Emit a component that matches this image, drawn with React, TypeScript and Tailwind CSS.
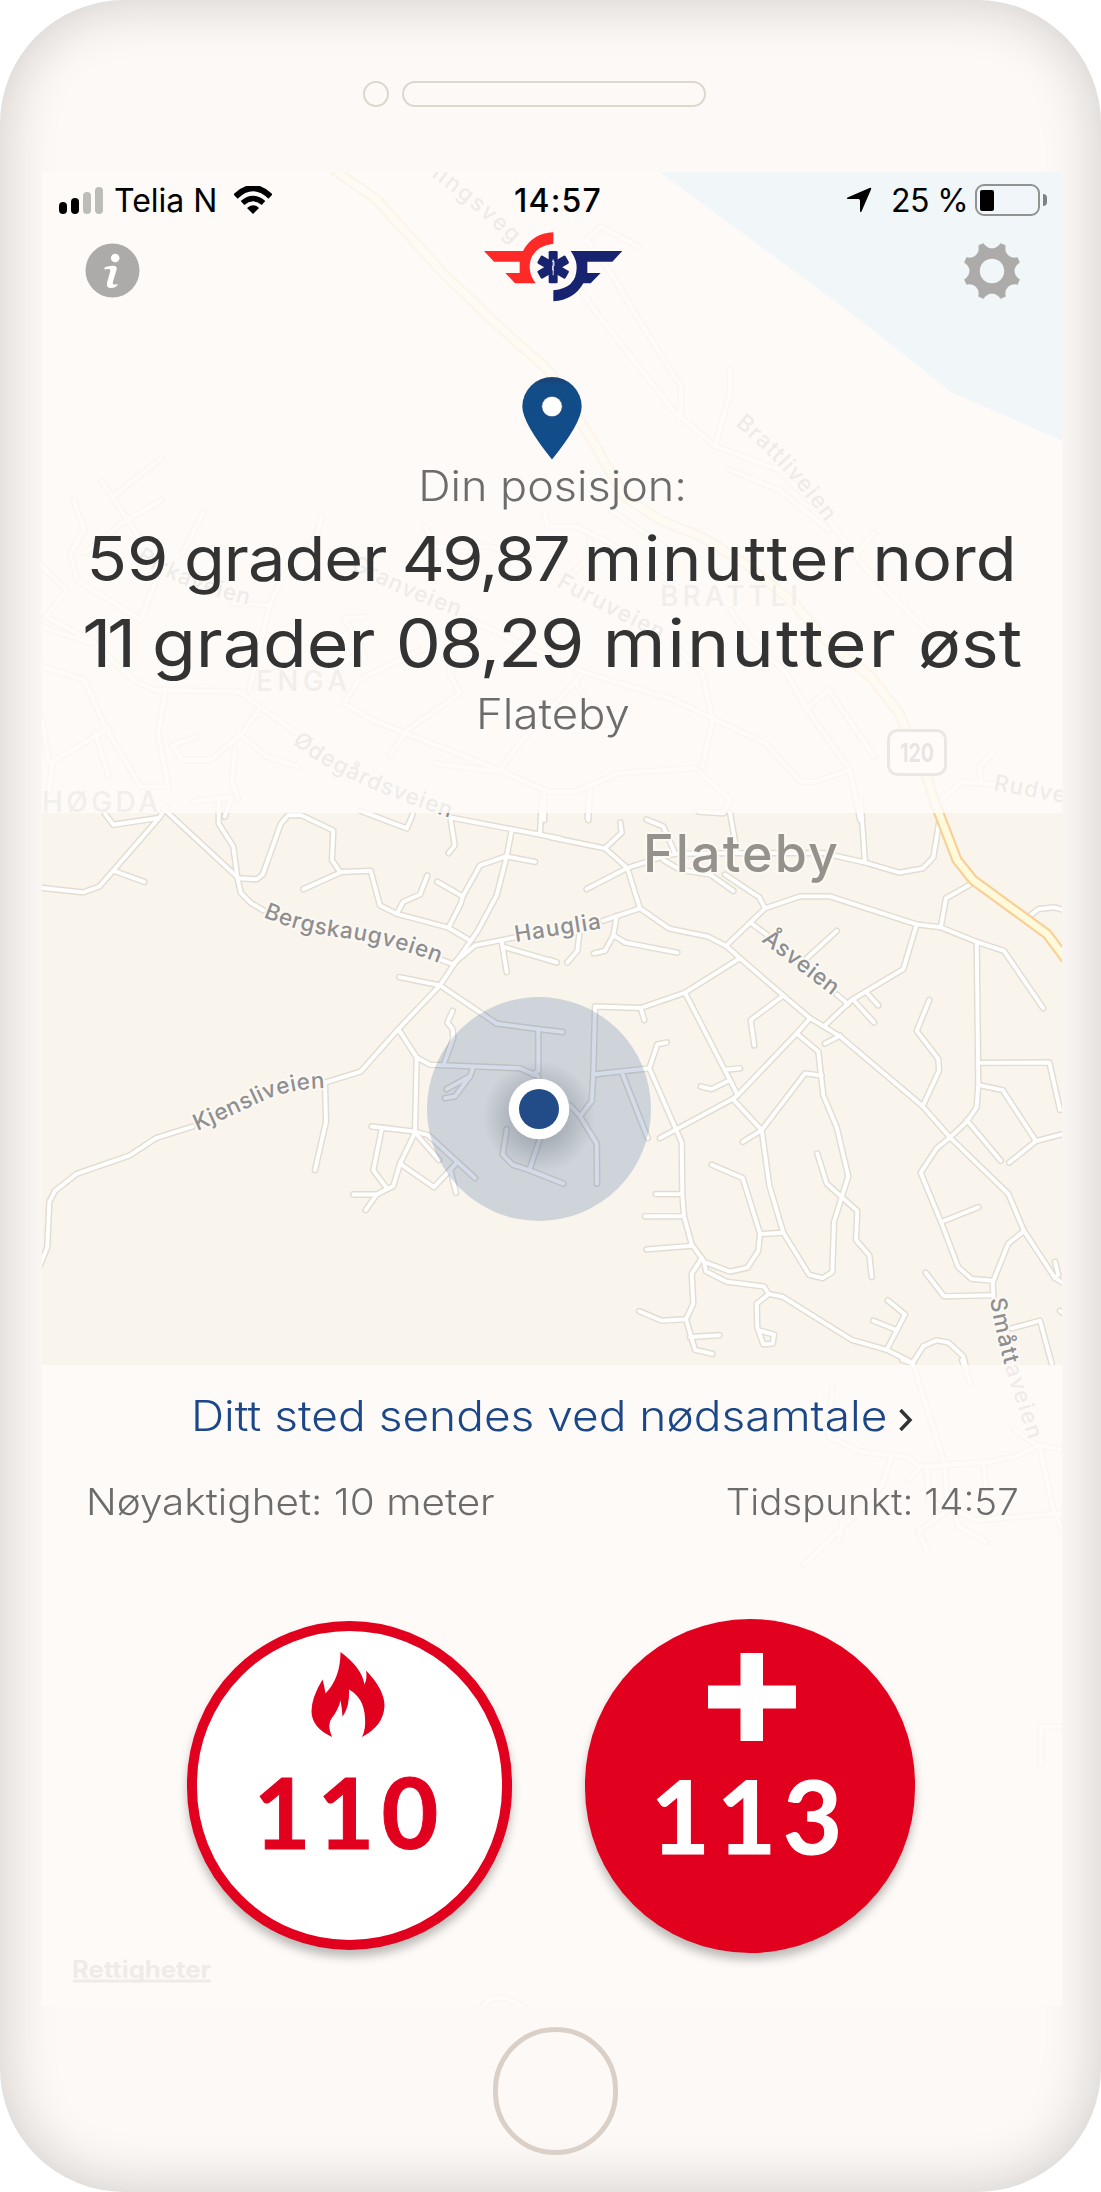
import React from "react";

type Tile = { ox: number; oy: number; sx: number; sy: number; roads: string[] };

// Road geometry, grouped in survey tiles: origin, scale and polylines in tile units.
const tiles: Tile[] = [
  {
    ox: 40, oy: 800, sx: 1 / 3, sy: 0.3636,
    roads: [
      "0,241 8,242 130,254 178,238 222,192 360,46 378,18",
      "195,38 220,68 350,50",
      "222,195 313,225",
      "378,30 592,212",
      "536,0 536,65 580,128 592,212 602,255 632,283 670,303",
      "592,215 650,218 668,205 722,66 744,42 784,42 880,84 876,165 900,198 992,195 1020,290 1070,313 1222,350 1288,385",
      "790,245 900,200",
      "1070,313 1090,280 1140,260 1162,208",
      "962,30 1100,78 1118,40",
      "1232,48 1560,106",
      "1232,55 1244,125 1226,146",
      "1505,0 1500,95",
      "1415,82 1400,155 1370,262 1312,362 1240,455 1200,510 1075,630 962,747 862,775",
      "1226,350 1262,285 1268,265 1320,180 1398,155 1485,170",
      "1192,225 1268,265",
      "1200,438 1240,452",
      "1240,450 1305,400 1425,378",
      "1385,390 1400,473",
      "1395,405 1548,446",
      "1078,487 1200,510 1370,615 1495,630 1568,638",
      "1075,630 1130,708 1170,728 1440,738 1495,760",
      "1210,730 1240,655 1238,630 1222,612 1238,580",
      "1130,708 1125,912",
      "995,898 1125,912 1165,922 1305,1040",
      "1025,905 1000,1018 1038,1065",
      "1125,915 1080,1000 1060,1062 1010,1085 940,1085",
      "1010,1085 977,1128",
      "1080,1000 1182,1065 1248,1000",
      "1125,915 1197,990",
      "1232,1020 1248,1080",
      "1300,735 1290,760 1220,795",
      "1290,760 1245,815 1215,820",
      "1495,630 1495,745 1478,755",
      "1400,905 1388,975 1418,1003 1468,1018 1570,1055",
      "1468,1018 1500,930",
      "855,775 858,885 825,1018",
      "458,898 348,930 268,978 110,1028 45,1075 28,1105 22,1230 0,1280",
    ],
  },
  {
    ox: 550, oy: 800, sx: 1 / 3, sy: 0.3636,
    roads: [
      "0,102 165,133 232,187 270,298 358,354 475,376 530,402 570,435 700,538 780,600 820,622 870,650 1118,842 1200,928 1375,1083 1422,1185 1515,1315 1540,1328",
      "115,0 113,50",
      "165,133 215,90 211,62",
      "110,245 232,187 340,155 375,148 560,146 820,146 945,172 1048,200 1118,188 1150,158 1172,35",
      "290,54 340,73 372,140",
      "540,35 560,140",
      "340,165 390,192 480,205 550,250",
      "525,205 628,268 645,298 535,395",
      "645,298 750,265 840,265 1100,342 1172,350 1280,390 1362,415 1480,573",
      "605,340 650,370",
      "765,440 860,360",
      "932,0 945,172",
      "1172,350 1188,270 1265,230",
      "1100,342 1060,465 905,550 822,622",
      "860,535 895,562",
      "950,530 985,565",
      "915,555 972,612",
      "825,670 870,648",
      "1280,390 1285,780 1280,845 1250,885 1200,928 1160,958 1112,1025 1175,1165 1225,1285 1265,1317 1328,1322 1330,1365",
      "1285,723 1498,722 1530,852",
      "1290,785 1358,798 1458,938 1378,997",
      "1458,938 1540,918",
      "1250,880 1352,992",
      "1138,550 1100,635 1165,712 1167,745 1118,842",
      "1175,1160 1285,1120",
      "1422,1185 1375,1220 1330,1322",
      "1330,1362 1182,1365 1127,1300",
      "270,298 160,332",
      "200,318 190,372 165,415 132,422",
      "195,375 225,392 382,420",
      "88,370 82,415 52,447",
      "0,440 20,447",
      "570,435 405,530 272,572 135,568 130,755 125,828 90,870 60,840",
      "272,572 283,605",
      "405,530 563,812 740,642 780,600",
      "563,812 548,822 330,930",
      "700,538 602,605 613,675",
      "740,642 805,692 820,812 860,900 895,1035 875,1092 852,1160 847,1298 818,1315 778,1306 700,1190 658,1060 635,908 548,822",
      "635,908 765,752 815,758",
      "635,908 578,940",
      "525,742 570,738",
      "540,770 485,795 452,788",
      "350,667 322,672 298,738 395,942 397,1082 402,1145 425,1222 455,1260 425,1303 430,1385 408,1428 435,1512 487,1523",
      "130,755 298,738",
      "218,755 293,930",
      "90,870 140,945 141,1055",
      "317,1084 397,1084",
      "285,1145 402,1145",
      "290,1236 425,1226",
      "455,1260 462,1270 540,1297 592,1286 625,1240 630,1192 578,1040 485,1003",
      "630,1194 700,1190",
      "462,1270 468,1296 530,1325 642,1338 655,1358 697,1366 905,1485 1010,1512 1088,1548 1120,1502 1160,1486 1195,1492 1240,1530 1248,1560",
      "655,1360 620,1385 622,1450 640,1497 668,1495 672,1470 632,1460",
      "268,1406 335,1432 408,1428",
      "420,1477 508,1472",
      "802,972 830,1055 922,1130 918,1210 958,1252 965,1312",
      "1010,1512 1065,1415 1013,1376",
      "970,1432 1040,1458",
      "1385,1453 1470,1432 1505,1550",
      "1515,1270 1525,1305 1515,1315",
      "1430,325 1465,300 1512,295 1540,302",
      "1530,1405 1540,1412",
    ],
  },
  {
    ox: 0, oy: 320, sx: 0.7022, sy: 1 / 3,
    roads: [
      "835,-240 855,-280 910,-220",
      "835,-240 870,-140 910,0 970,200 970,280",
      "740,-230 790,-200 850,-20 960,275 1020,380 1110,450 1180,600 1230,740 1310,910 1360,1000",
      "1040,150 1040,220 1030,290 1020,370",
      "1040,450 1110,510 1180,630",
      "230,415 160,530 145,485",
      "160,530 200,660",
      "105,540 120,630 100,700 110,780 200,900 230,740",
      "230,540 180,600 120,700",
      "290,575 260,700",
      "458,590 450,650 430,700 400,780 385,850 355,1110",
      "385,855 330,850",
      "60,740 95,810 65,890 130,960 190,1080 220,1110 340,1115 370,1160 430,1250",
      "60,920 130,970",
      "60,1040 120,1080 150,1220 200,1400 240,1400 225,1240 235,1120",
      "370,1165 345,1240 300,1320 260,1320 245,1275 280,1250",
      "345,1250 380,1310 425,1340",
      "335,1290 330,1380 340,1440",
      "275,1445 330,1430 320,1490",
      "60,1200 70,1330 155,1225",
      "135,1240 155,1370",
      "75,1330 70,1410",
      "490,1150 510,1080 600,990",
      "490,1150 530,1200 710,1350 780,1415 820,1415 880,1360 990,1345 1040,1440 1030,1480 995,1475",
      "620,1330 710,1355 740,1270 830,1060",
      "640,1000 640,1060 655,1120 580,1230 555,1305",
      "520,890 490,895 510,960 520,1020",
      "660,890 830,1055 960,1140 1090,1270 1140,1385 1160,1385 1210,1350",
      "1000,1340 1015,1200 1000,1060 960,970",
      "820,1090 850,1190",
      "1040,870 1070,960 1120,1060 1150,1170 1210,1350 1225,1500",
      "1115,1060 1160,980",
      "1150,1165 1180,1110 1245,1310",
      "775,570 780,620 820,620 860,660 950,780",
      "840,660 840,710 800,790",
      "870,570 960,700",
      "1415,1295 1395,1340 1398,1390 1370,1385 1335,1450",
      "1398,1390 1420,1395",
      "605,620 620,680 700,680 760,720",
      "775,1420 775,1500",
      "840,1410 838,1500",
      "1245,640 1220,700",
    ],
  },
  {
    ox: 0, oy: 1360, sx: 0.7022, sy: 1 / 3,
    roads: [
      "1285,0 1300,10 1345,310",
      "1370,0 1382,70",
      "1185,85 1180,230 1225,275 1290,290 1310,320 1410,305 1445,290 1480,255 1513,270",
      "1270,290 1255,380 1220,460 1145,615",
      "1310,320 1295,360",
      "1320,325 1322,420 1350,450 1308,515 1322,580",
      "1345,310 1350,440 1390,480 1513,460",
      "1400,310 1405,400",
      "1480,255 1500,450 1513,510",
      "1445,210 1480,260",
      "1360,460 1365,500 1405,545",
      "1200,480 1195,540",
      "1482,1215 1482,1100 1513,1100",
      "688,1935 700,1915 720,1915 750,1945",
    ],
  },
];

const paths = tiles.flatMap((t) =>
  t.roads.map(
    (r) =>
      "M" +
      r
        .split(" ")
        .map((p) => {
          const [x, y] = p.split(",").map(Number);
          return `${(t.ox + x * t.sx).toFixed(1)} ${(t.oy + y * t.sy).toFixed(1)}`;
        })
        .join("L"),
  ),
);

const highway =
  "M324 160L340 174L376 199L442 272L492 320L548 370L590 437L625 497L660 520L702 537L744 563L794 603L822 637L871 677L899 713L927 777L935 803L957 860L973 880L1047 934L1068 962";

const labels: { id: string; d: string; text: string; spacing: number }[] = [
  { id: "berg", d: "M263 917Q300 933 345 938Q392 944 446 966", text: "Bergskaugveien", spacing: 0.7 },
  { id: "kjen", d: "M197 1131Q240 1112 265 1100Q292 1088 332 1088", text: "Kjensliveien", spacing: 0.6 },
  { id: "haug", d: "M516 942Q560 935 612 927", text: "Hauglia", spacing: 1 },
  { id: "asv", d: "M761 941L843 1004", text: "Åsveien", spacing: 0.6 },
  { id: "smat", d: "M990 1299Q996 1335 1006 1370Q1015 1400 1034 1455", text: "Småttaveien", spacing: 1.4 },
  { id: "oded", d: "M292 743Q340 783 460 821", text: "Ødegårdsveien", spacing: 1 },
  { id: "gran", d: "M350 568Q400 598 480 624", text: "Granveien", spacing: 1.2 },
  { id: "rka", d: "M136 560Q190 595 270 609", text: "Birkaveien", spacing: 1 },
  { id: "furu", d: "M556 586Q600 611 665 642", text: "Furuveien", spacing: 1.4 },
  { id: "brat", d: "M735 425Q790 470 842 545", text: "Brattliveien", spacing: 1.2 },
  { id: "ling", d: "M431 176Q475 208 530 260", text: "lingsveg", spacing: 2.2 },
  { id: "rud", d: "M993 790L1070 804", text: "Rudve", spacing: 1.2 },
];

function MapCanvas() {
  return (
    <svg
      className="absolute inset-0 h-full w-full font-['Inter',sans-serif]"
      viewBox="42 172 1020 1834"
      fill="none"
      strokeLinecap="round"
      strokeLinejoin="round"
    >
      <rect x="42" y="172" width="1020" height="1834" fill="#f9f5ed" />
      <path d="M660 172L860 320L951 392L1062 441V172Z" fill="#a4e1f6" />
      {paths.map((d, i) => (
        <path key={i} d={d} stroke="#e3dcd1" strokeWidth="6.8" />
      ))}
      {paths.map((d, i) => (
        <path key={i} d={d} stroke="#ffffff" strokeWidth="3.9" />
      ))}
      <path d={highway} stroke="#f9cf95" strokeWidth="11" />
      <path d={highway} stroke="#fffadc" strokeWidth="6.8" />
      <g fill="#8f8f91" stroke="#fcf9f4" strokeWidth="4" fontWeight="500" fontSize="22.500" style={{ paintOrder: "stroke" }}>
        {labels.map((l) => (
          <React.Fragment key={l.id}>
            <path id={l.id} d={l.d} fill="none" stroke="none" />
            <text letterSpacing={l.spacing}>
              <textPath href={`#${l.id}`}>{l.text}</textPath>
            </text>
          </React.Fragment>
        ))}
      </g>
      <g fill="#95918b">
        <text x="643" y="872" fontSize="52" fontWeight="450" textLength="195" stroke="#fcf9f4" strokeWidth="4" style={{ paintOrder: "stroke" }}>
          Flateby
        </text>
        <g fill="#a8a5a0" fontSize="28" fontWeight="500">
          <text x="256" y="691" textLength="91">ENGA</text>
          <text x="660" y="606" textLength="138">BRATTLI</text>
          <text x="42" y="812" textLength="116">HØGDA</text>
        </g>
      </g>
      <rect x="888.5" y="730.5" width="57" height="44" rx="9" fill="#fff" stroke="#757575" strokeWidth="3" />
      <text x="917" y="762" fontSize="25" fontWeight="700" fill="#666" textAnchor="middle" textLength="34" lengthAdjust="spacingAndGlyphs">120</text>
      <g fontSize="24" fontWeight="700" fill="#8b8b8b">
        <text x="72" y="1978" textLength="139" lengthAdjust="spacingAndGlyphs">Rettigheter</text>
        <rect x="73" y="1979.500" width="138" height="3" />
      </g>
      <defs>
        <radialGradient id="glow">
          <stop offset="0.4" stopColor="#5a6270" stopOpacity="0.34" />
          <stop offset="1" stopColor="#5a6270" stopOpacity="0" />
        </radialGradient>
      </defs>
      <circle cx="539" cy="1109" r="112" fill="#214c88" fillOpacity="0.195" />
      <circle cx="539" cy="1117" r="56" fill="url(#glow)" />
      <circle cx="539" cy="1109" r="30.3" fill="#fff" />
      <circle cx="539" cy="1109" r="20" fill="#214c88" />
    </svg>
  );
}

function StatusBar() {
  return (
    <div className="flex h-14 items-center text-[32px] leading-none text-black">
      <div className="ml-[17px] flex h-[27px] items-end gap-1">
        <i className="h-3 w-2 rounded-sm bg-black" />
        <i className="h-4 w-2 rounded-sm bg-black" />
        <i className="h-[22px] w-2 rounded-sm bg-[#bcbcb8]" />
        <i className="h-[27px] w-2 rounded-sm bg-[#bcbcb8]" />
      </div>
      <span className="ml-[11px] w-[103px] whitespace-nowrap pt-px">Telia N</span>
      <svg className="ml-[17px] h-7 w-[38px]" viewBox="0 0 38 28">
        <path d="M1.5 10.5Q19 -6.500 36.500 10.500" fill="none" stroke="#000" strokeWidth="6" />
        <path d="M8.500 17Q19 8 29.500 17" fill="none" stroke="#000" strokeWidth="5.500" />
        <path d="M13 22Q19 16.500 25 22L19 28Z" />
      </svg>
      <span className="ml-[242px] w-[92px] whitespace-nowrap pt-px font-medium tracking-[1.2px]">14:57</span>
      <svg className="ml-[240px] h-[26px] w-[26px]" viewBox="0 0 26 26">
        <path d="M23.500 1Q26 0 25 2.500L15.500 24.500Q14.500 26 14 24V13.500Q14 12 12.500 12H2Q0 11.500 1.500 10.500Z" />
      </svg>
      <span className="ml-[19px] w-[76px] whitespace-nowrap pt-px tracking-[-0.6px]">25 %</span>
      <div className="ml-2 flex h-8 w-[65px] items-center rounded-[9px] border-[2.5px] border-[#909392] pl-[3px]">
        <i className="h-[21px] w-[14px] rounded-[2px] bg-black" />
      </div>
      <i className="ml-[3px] h-3 w-1 rounded-r-full bg-[#808382]" />
    </div>
  );
}

function InfoIcon() {
  return (
    <svg className="h-[55px] w-[55px]" viewBox="0 0 55 55">
      <circle cx="27.500" cy="27.500" r="27" fill="#acaba9" />
      <circle cx="30.200" cy="15" r="4.300" fill="#fff" />
      <path d="M19.500 24.500Q23 22.500 29 22.700Q32.500 23 31.500 27L28 38.500Q27 42 30 41.500L33 41.200Q31 45 26 45Q21 45 22 40L25 29Q26 25.500 23 26L19.500 26.500Z" fill="#fff" />
    </svg>
  );
}

function GearIcon() {
  return (
    <svg className="h-14 w-14" viewBox="-28 -28 56 56">
      <mask id="gear">
        <circle r="29" fill="#fff" />
        <circle r="12.200" fill="#000" />
        {[0, 45, 90, 135, 180, 225, 270, 315].map((a) => (
          <circle key={a} cx="31.500" r="9" fill="#000" transform={`rotate(${a})`} />
        ))}
      </mask>
      <rect x="-28" y="-28" width="56" height="56" fill="#acaba9" mask="url(#gear)" />
    </svg>
  );
}

function Logo() {
  return (
    <svg className="h-[70px] w-[140px]" viewBox="68 36 418 210">
      <path fill="#ff2a27" d="M70 93H187Q215 40 278 37V71Q208 80 207 142Q208 168 225 190H163L134 159H177V125H100Z" />
      <path fill="#18236f" d="M330 93H485L455 125H380V159H420L390 190H368Q340 240 278 244V211Q348 205 348 142Q348 118 330 93Z" />
      {[0, 60, 120].map((a) => (
        <rect key={a} x="264" y="93" width="27" height="97" rx="4" fill="#18236f" transform={`rotate(${a} 277.500 141.500)`} />
      ))}
      <path d="M277.500 118V166M274 124H280V138H276V150H280" stroke="#fff" strokeWidth="2.500" fill="none" />
    </svg>
  );
}

function PinIcon() {
  return (
    <svg className="h-[83px] w-[60px]" viewBox="187 470 181 250">
      <defs>
        <linearGradient id="pin" x1="0" y1="0" x2="0" y2="1">
          <stop offset="0" stopColor="#203f6b" />
          <stop offset="0.090" stopColor="#134c87" />
          <stop offset="1" stopColor="#114d8b" />
        </linearGradient>
      </defs>
      <path fill="url(#pin)" d="M277.500 719Q188 608 188 559A89.500 89 0 0 1 367 559Q367 608 277.500 719Z" />
      <circle cx="277.500" cy="559" r="31" fill="#fff" stroke="#203f6b" strokeWidth="2" />
    </svg>
  );
}

export default function App() {
  return (
    <div className="h-[2192px] w-[1101px] overflow-hidden bg-white font-['Inter',sans-serif]">
      <div className="flex h-full flex-col rounded-[124px] bg-[#fdf9f6] shadow-[inset_0_0_58px_rgba(0,14,14,0.2)]">
        <div className="flex h-[172px] shrink-0 pl-[363px] pt-[81px]">
          <div className="h-[26px] w-[26px] rounded-full border-2 border-[#dfd6cd]" />
          <div className="ml-[13px] h-[26px] w-[304px] rounded-full border-2 border-[#dfd6cd]" />
        </div>

        <div className="relative ml-[42px] h-[1834px] w-[1020px] shrink-0 overflow-hidden">
          <MapCanvas />
          <div className="relative flex h-full flex-col">
            <section className="h-[641px] bg-[#fefaf8]/86">
              <StatusBar />
              <div className="flex h-[76px] items-start pl-[43px] pr-[42px]">
                <div className="flex-1 pt-[15px]"><InfoIcon /></div>
                <div className="pt-1"><Logo /></div>
                <div className="flex flex-1 justify-end pt-[15px]"><GearIcon /></div>
              </div>
              <div className="mt-[73px] flex flex-col items-center whitespace-nowrap">
                <PinIcon />
                <p className="ml-[2px] scale-x-[1.07] text-[42px] font-light leading-[52px] text-[#6c6c6c]">Din posisjon:</p>
                <p className="mt-[5px] scale-x-[1.075] text-[62px] leading-[84px] text-[#333] [word-spacing:-3px]">
                  59 <span className="tracking-[-0.9px]">grader</span> <span className="tracking-[-2.4px]">49,87</span>{" "}
                  <span className="tracking-[1.7px]">minutter</span> nord
                </p>
                <p className="scale-x-[1.085] text-[66px] leading-[84px] text-[#333]">
                  <span className="tracking-[-4px]">11</span> grader <span className="tracking-[-1.8px]">08,29</span>{" "}
                  <span className="tracking-[2px]">minutter</span> øst
                </p>
                <p className="ml-[2px] mt-[3px] scale-x-[1.085] text-[42px] font-light leading-[52px] text-[#6c6c6c]">Flateby</p>
              </div>
            </section>

            <div className="h-[552px]" />

            <section className="flex-1 bg-[#fefaf8]/86 pt-[25px]">
              <div className="flex items-center pl-[149px] text-[42px] font-light leading-[52px] text-[#1b4788]">
                <span className="w-[695px] origin-left scale-x-[1.096] whitespace-nowrap">Ditt sted sendes ved nødsamtale</span>
                <svg className="ml-[13px] mt-2 h-[22px] w-[14px]" viewBox="0 0 14 22" fill="none" stroke="#333" strokeWidth="3.500">
                  <path d="M1.500 1L11 11L1.500 21" />
                </svg>
              </div>
              <div className="mt-[35px] flex justify-between whitespace-nowrap pl-[44px] pr-[43px] text-[37px] font-light leading-[50px] text-[#6c6c6c]">
                <span className="origin-left scale-x-[1.094]">Nøyaktighet: 10 meter</span>
                <span className="origin-right scale-x-[1.04]">Tidspunkt: 14:57</span>
              </div>
              <div className="mt-[92px] flex items-start gap-[73px] pl-[145px] font-['Lato',sans-serif] font-bold">
                <button className="mt-[2px] flex h-[329px] w-[325px] flex-col items-center rounded-full border-[10px] border-[#e2001f] bg-white pt-[21px] text-[#e2001f] shadow-[0_7px_10px_rgba(0,0,0,0.25)]">
                  <svg className="mr-[3px] h-[85px] w-[74px]" viewBox="303 187 148 256" preserveAspectRatio="none" fill="currentColor">
                    <path d="M362 187Q405 235 410 285Q416 265 413 243Q450 300 450 350Q448 410 405 443Q413 420 411 385Q409 325 379 300Q381 350 366 382Q365 355 362 332Q358 360 345 385Q334 405 345 443Q304 415 304 365Q304 325 326 270Q330 290 332 312Q362 265 362 187Z" />
                  </svg>
                  <span className="mt-[26px] text-[98px] leading-[97px] tracking-[7px] [-webkit-text-stroke:1px_currentColor]">110</span>
                </button>
                <button className="flex h-[334px] w-[330px] flex-col items-center rounded-full bg-[#e2001f] pt-[34px] text-white shadow-[0_7px_10px_rgba(0,0,0,0.25)]">
                  <svg className="ml-[4px] h-[88px] w-[88px]" viewBox="0 0 88 88" fill="currentColor">
                    <path d="M32.500 0H55V32.500H88V55.500H55V88H32.500V55.500H0V32.500H32.500Z" />
                  </svg>
                  <span className="mt-[23px] text-[102px] leading-[102px] tracking-[7px] [-webkit-text-stroke:1px_currentColor]">113</span>
                </button>
              </div>
            </section>
          </div>
        </div>

        <div className="ml-[493px] mt-[21px] h-[128px] w-[125px] rounded-full border-[5px] border-[#dad0c7]" />
      </div>
    </div>
  );
}
